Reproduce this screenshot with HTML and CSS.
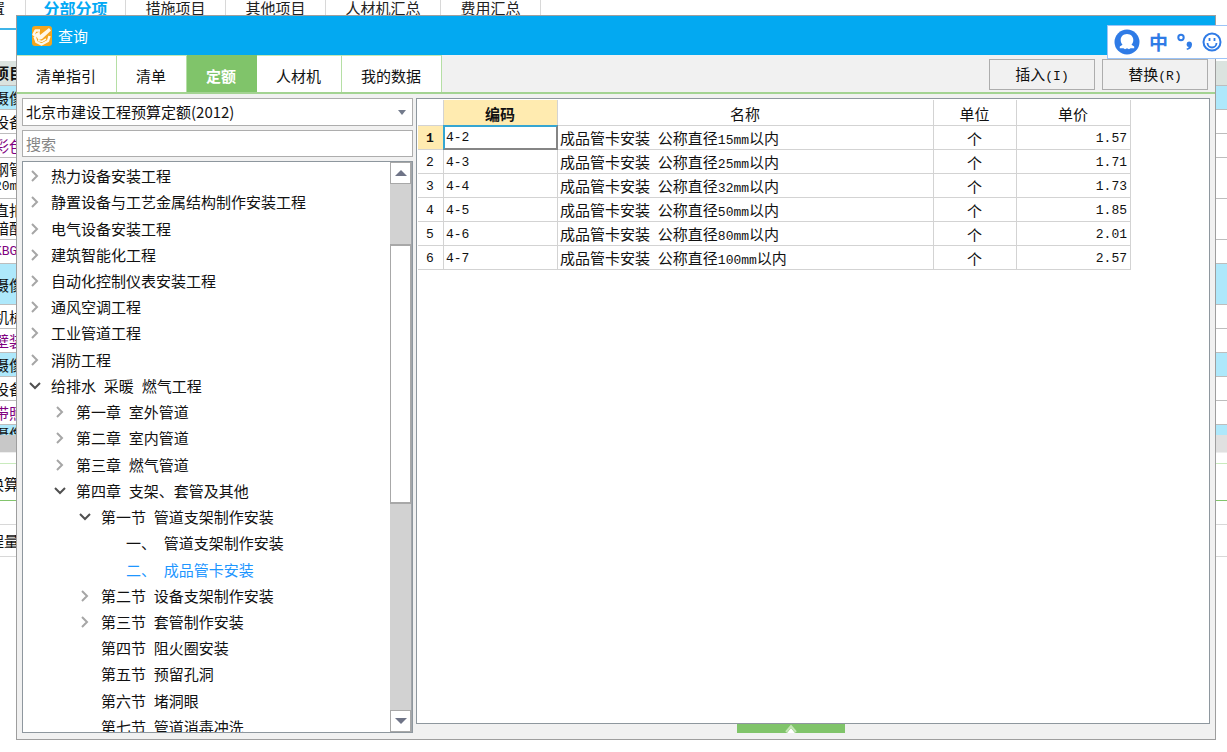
FILE: index.html
```html
<!DOCTYPE html>
<html lang="zh-CN">
<head>
<meta charset="utf-8">
<title>查询</title>
<link rel="stylesheet" href="styles.css">
</head>
<body>
<svg class="defs" aria-hidden="true">
  <symbol id="right" viewBox="0 0 12 12"><path d="M3 1l5 5-5 5" fill="none" stroke="#a6a6a6" stroke-width="2"/></symbol>
  <symbol id="down" viewBox="0 0 12 12"><path d="M1 3l5 5 5-5" fill="none" stroke="#505050" stroke-width="2"/></symbol>
</svg>

<main class="sheet">
  <nav class="sheet-tabs">
    <a class="sheet-tab first" href="#">置</a>
    <a class="sheet-tab current" href="#">分部分项</a>
    <a class="sheet-tab" href="#">措施项目</a>
    <a class="sheet-tab" href="#">其他项目</a>
    <a class="sheet-tab wide" href="#">人材机汇总</a>
    <a class="sheet-tab" href="#">费用汇总</a>
  </nav>
  <div class="sheet-rows">
    <div class="row head"><div>项目</div></div>
    <div class="row group"><div>摄像</div></div>
    <div class="row"><div>设备</div></div>
    <div class="row material"><div>彩色</div></div>
    <div class="row tall"><div>钢管</div><div class="n">20mm</div></div>
    <div class="row tall"><div>直扣</div><div>暗配</div></div>
    <div class="row material"><div class="n">KBG</div></div>
    <div class="row group tall single"><div>摄像</div></div>
    <div class="row"><div>机械</div></div>
    <div class="row material"><div>壁装</div></div>
    <div class="row group"><div>摄像</div></div>
    <div class="row"><div>设备</div></div>
    <div class="row material"><div>带照</div></div>
    <div class="row group cut"><div>摄像</div></div>
    <div class="row bar"></div>
  </div>
  <div class="detail">
    <div class="detail-tab">换算</div>
    <div class="detail-gap"></div>
    <div class="detail-head">程量</div>
  </div>
</main>

<section class="dialog" role="dialog" aria-labelledby="dialog-title">
  <header class="titlebar">
    <svg class="logo" viewBox="0 0 20 20" aria-hidden="true">
      <rect width="20" height="20" rx="3" fill="#f5a51d"/>
      <path d="M8 4.500H3.500L1.500 8.500l3.500 2M2.500 10.500l2 5.500 5 2.500 6.500-3.500 1.500-5" fill="none" stroke="#fff8e8" stroke-width="2.400" stroke-linejoin="round"/>
      <path d="M3 8l4.500-2.500L8 9l9-7 2 2.500-9 8.500-3.500 1z" fill="#fff8e8"/>
      <path d="M6 14.500l4 1 4-2.500" fill="none" stroke="#fff8e8" stroke-width="1.500"/>
    </svg>
    <h1 id="dialog-title">查询</h1>
  </header>

  <div class="toolbar">
    <nav class="tabs">
      <button class="tab">清单指引</button>
      <button class="tab">清单</button>
      <button class="tab active">定额</button>
      <button class="tab">人材机</button>
      <button class="tab">我的数据</button>
    </nav>
    <div class="actions">
      <button class="action">插入<span class="n">(I)</span></button>
      <button class="action">替换<span class="n">(R)</span></button>
    </div>
  </div>

  <div class="body">
    <aside class="side">
      <div class="combo">
        <select aria-label="定额库"><option>北京市建设工程预算定额(2012)</option></select>
        <svg class="caret" viewBox="0 0 8 5" aria-hidden="true"><path d="M0 0h8L4 5z" fill="#737b8c"/></svg>
      </div>
      <input class="search" type="text" placeholder="搜索" aria-label="搜索">
      <div class="tree">
        <ul class="nodes">
          <li><svg><use href="#right"/></svg>热力设备安装工程</li>
          <li><svg><use href="#right"/></svg>静置设备与工艺金属结构制作安装工程</li>
          <li><svg><use href="#right"/></svg>电气设备安装工程</li>
          <li><svg><use href="#right"/></svg>建筑智能化工程</li>
          <li><svg><use href="#right"/></svg>自动化控制仪表安装工程</li>
          <li><svg><use href="#right"/></svg>通风空调工程</li>
          <li><svg><use href="#right"/></svg>工业管道工程</li>
          <li><svg><use href="#right"/></svg>消防工程</li>
          <li><svg><use href="#down"/></svg>给排水<span class="n"> </span>采暖<span class="n"> </span>燃气工程</li>
          <li class="l2"><svg><use href="#right"/></svg>第一章<span class="n"> </span>室外管道</li>
          <li class="l2"><svg><use href="#right"/></svg>第二章<span class="n"> </span>室内管道</li>
          <li class="l2"><svg><use href="#right"/></svg>第三章<span class="n"> </span>燃气管道</li>
          <li class="l2"><svg><use href="#down"/></svg>第四章<span class="n"> </span>支架、套管及其他</li>
          <li class="l3"><svg><use href="#down"/></svg>第一节<span class="n"> </span>管道支架制作安装</li>
          <li class="l4"><svg></svg>一、<span class="n"> </span>管道支架制作安装</li>
          <li class="l4 selected"><svg></svg>二、<span class="n"> </span>成品管卡安装</li>
          <li class="l3"><svg><use href="#right"/></svg>第二节<span class="n"> </span>设备支架制作安装</li>
          <li class="l3"><svg><use href="#right"/></svg>第三节<span class="n"> </span>套管制作安装</li>
          <li class="l3"><svg></svg>第四节<span class="n"> </span>阻火圈安装</li>
          <li class="l3"><svg></svg>第五节<span class="n"> </span>预留孔洞</li>
          <li class="l3"><svg></svg>第六节<span class="n"> </span>堵洞眼</li>
          <li class="l3"><svg></svg>第七节<span class="n"> </span>管道消毒冲洗</li>
        </ul>
        <div class="scrollbar">
          <button class="arrow" aria-label="向上"><svg viewBox="0 0 12 6"><path d="M0 6l6-6 6 6z" fill="#6f7487"/></svg></button>
          <div class="track-above"></div>
          <div class="thumb"></div>
          <div class="track-below"></div>
          <button class="arrow" aria-label="向下"><svg viewBox="0 0 12 6"><path d="M0 0h12L6 6z" fill="#6f7487"/></svg></button>
        </div>
      </div>
    </aside>

    <div class="result">
      <div class="grid-panel">
        <table class="grid">
          <colgroup><col class="c-no"><col class="c-code"><col class="c-name"><col class="c-unit"><col class="c-price"></colgroup>
          <thead>
            <tr><th></th><th class="hot">编码</th><th>名称</th><th>单位</th><th>单价</th></tr>
          </thead>
          <tbody>
            <tr><td class="no hot">1</td><td class="focus"><div class="n">4-2</div></td><td>成品管卡安装<span class="n"> </span>公称直径<span class="n">15mm</span>以内</td><td class="unit">个</td><td class="price">1.57</td></tr>
            <tr><td class="no">2</td><td class="n">4-3</td><td>成品管卡安装<span class="n"> </span>公称直径<span class="n">25mm</span>以内</td><td class="unit">个</td><td class="price">1.71</td></tr>
            <tr><td class="no">3</td><td class="n">4-4</td><td>成品管卡安装<span class="n"> </span>公称直径<span class="n">32mm</span>以内</td><td class="unit">个</td><td class="price">1.73</td></tr>
            <tr><td class="no">4</td><td class="n">4-5</td><td>成品管卡安装<span class="n"> </span>公称直径<span class="n">50mm</span>以内</td><td class="unit">个</td><td class="price">1.85</td></tr>
            <tr><td class="no">5</td><td class="n">4-6</td><td>成品管卡安装<span class="n"> </span>公称直径<span class="n">80mm</span>以内</td><td class="unit">个</td><td class="price">2.01</td></tr>
            <tr><td class="no">6</td><td class="n">4-7</td><td>成品管卡安装<span class="n"> </span>公称直径<span class="n">100mm</span>以内</td><td class="unit">个</td><td class="price">2.57</td></tr>
          </tbody>
        </table>
      </div>
      <button class="handle" aria-label="展开"><svg viewBox="0 0 12 9"><path d="M6 4L10 9H2z" fill="#fff"/><path d="M1 8l5-6 5 6" fill="none" stroke="#c4e6b6" stroke-width="2"/></svg></button>
    </div>
  </div>
</section>

<div class="ime">
  <svg class="ime-user" viewBox="0 0 26 26" aria-hidden="true">
    <circle cx="13" cy="13" r="12.500" fill="#2f7be6"/>
    <path d="M13 5c4 0 6.300 2.800 6.300 6 0 2.200-.8 3.600-1.800 4.800l2.700 1.600v1.800h-3.700L15 20.200l-2-1-2 1-1.500-1H5.800v-1.800l2.700-1.600c-1-1.200-1.800-2.600-1.800-4.800 0-3.200 2.300-6 6.300-6z" fill="#fff"/>
  </svg>
  <span class="ime-mode">中</span>
  <svg class="ime-punct" viewBox="0 0 16 18" aria-hidden="true">
    <circle cx="4" cy="4.500" r="2.700" fill="none" stroke="#2f7be6" stroke-width="2"/>
    <path d="M12 8.500a3 3 0 0 1 3 3c0 3-2 5-5 5.500l-.5-1.500c1.300-.3 2-.8 2.200-1.500A2.800 2.800 0 0 1 12 8.500z" fill="#2f7be6"/>
  </svg>
  <svg class="ime-face" viewBox="0 0 20 20" aria-hidden="true">
    <circle cx="10" cy="10" r="8.500" fill="none" stroke="#2f7be6" stroke-width="2"/>
    <path d="M5.500 11a4.500 4.500 0 0 0 9 0M7.500 6v3M12.500 6v3" fill="none" stroke="#2f7be6" stroke-width="1.800"/>
  </svg>
</div>
</body>
</html>
```

FILE: styles.css
```css
* { box-sizing: border-box; }

body {
  margin: 0;
  height: 100vh;
  overflow: hidden;
  position: relative;
  background: #fff;
  color: #111;
  font: 15px/18px "Noto Sans CJK SC", sans-serif;
}

button, input, select { font: inherit; color: inherit; margin: 0; border-radius: 0; }
ul { margin: 0; padding: 0; list-style: none; }
.defs { display: none; }

/* half-width characters */
.n, .price, .no { font-family: "Liberation Mono", monospace; font-size: 13px; white-space: pre; }

/* sheet behind the dialog */
.sheet { display: flex; flex-direction: column; }
.sheet-tabs { display: flex; height: 30px; border-bottom: 2px solid #3fb4e8; }
.sheet-tab {
  flex: 0 0 100px;
  line-height: 16px;
  text-align: center;
  text-decoration: none;
  color: #222;
  border-right: 1px solid #d8d8d8;
}
.sheet-tab.first { flex-basis: 26px; text-indent: -10px; text-align: left; }
.sheet-tab.current { color: #03a9f4; font-weight: bold; font-size: 16px; }
.sheet-tab.wide { flex-basis: 115px; }

.sheet-rows { margin-top: 31px; }
.row {
  height: 24px;
  padding-top: 3px;
  border-bottom: 1px solid #bdbdbd;
  overflow: hidden;
}
.row div { margin-left: -6px; }
.row.head { height: 25px; background: #dbe3df; font-weight: bold; }
.row.group { background: #aee8fb; }
.row.material { color: #800080; }
.row.tall { height: 41px; padding-top: 2px; }
.row.single { padding-top: 12px; }
.row.cut { height: 10px; padding-top: 0; border: 0; }
.row.bar { height: 18px; background: linear-gradient(to right, #c8c8c8 50%, #e0e0e0 50%); border-bottom: 1px solid #eee; }
.detail { margin-top: 10px; text-indent: -11px; }
.detail-tab { height: 38px; padding-top: 11px; border-top: 1px solid #c9ebbd; border-bottom: 1px solid #82c46c; }
.detail-gap { height: 24px; border-bottom: 1px solid #d8d8d8; }
.detail-head { height: 32px; padding-top: 7px; border-bottom: 1px solid #d8d8d8; }

/* dialog */
.dialog {
  position: absolute;
  inset: 15px 11px 12px 16px;
  display: flex;
  flex-direction: column;
  background: #f1f1f1;
  border: 1px solid #9e9e9e;
}
.titlebar {
  flex: none;
  display: flex;
  align-items: center;
  gap: 6px;
  height: 39px;
  padding-left: 15px;
  background: #03a9f1;
  color: #fff;
}
.titlebar h1 { margin: 0; font-size: 15px; font-weight: normal; }
.logo { width: 20px; height: 20px; }

.toolbar {
  flex: none;
  display: flex;
  justify-content: space-between;
  height: 39px;
  border-bottom: 2px solid #a3d392;
}
.tabs { display: flex; }
.tab {
  padding: 3px 20px 0 19px;
  background: #fff;
  border: 0;
  border-top: 1px solid #c5e8b7;
  border-right: 1px solid #b5dfa5;
}
.tab.active { background: #80c46a; border-color: #80c46a; color: #fff; font-weight: bold; }
.actions { display: flex; gap: 7px; padding: 4px 7px 2px 0; }
.action { width: 106px; padding: 2px 0 0; background: #f1f1f1; border: 1px solid #adadad; }

.body { flex: 1; min-height: 0; display: flex; gap: 3px; padding: 4px 5px 6px; }
.side { flex: 0 0 391px; display: flex; flex-direction: column; gap: 4px; }
.combo { position: relative; flex: none; height: 28px; }
.combo select {
  width: 100%;
  height: 100%;
  padding: 0 20px 0 3px;
  appearance: none;
  background: #fff;
  border: 1px solid #adadad;
}
.caret { position: absolute; right: 7px; top: 12px; width: 8px; height: 5px; pointer-events: none; }
.search { flex: none; height: 27px; padding: 0 3px; background: #fff; border: 1px solid #adadad; }
.search::placeholder { color: #858585; }

.tree { flex: 1; min-height: 0; display: flex; overflow: hidden; background: #fff; border: 1px solid #8e979e; }
.nodes { flex: 1; height: calc(100% + 8px); padding-top: 1px; display: grid; grid-auto-rows: 1fr; }
.nodes li { display: flex; align-items: center; min-height: 0; padding-left: 6px; white-space: pre; }
.nodes svg { flex: none; width: 12px; height: 12px; margin-right: 10px; }
.nodes .l2 { padding-left: 31px; }
.nodes .l3 { padding-left: 56px; }
.nodes .l4 { padding-left: 81px; }
.nodes .selected { color: #1e96ff; }

.scrollbar { flex: 0 0 22px; display: flex; flex-direction: column; background: #d2d2d2; border-right: 1px solid #a2a6ab; }
.arrow {
  flex: 0 0 22px;
  display: flex;
  align-items: center;
  justify-content: center;
  padding: 0;
  background: #fff;
  border: 1px solid #a8a8a8;
}
.arrow svg { width: 12px; height: 6px; }
.track-above { flex: 60; }
.thumb { flex: 258; background: #fff; border: 1px solid #a8a8a8; border-width: 2px 1px; }
.track-below { flex: 208; }

.result { flex: 1; min-width: 0; display: flex; flex-direction: column; align-items: center; }
.grid-panel { flex: 1; align-self: stretch; background: #fff; border: 1px solid #8e979e; padding: 1px; }
.grid { table-layout: fixed; width: 713px; border-collapse: separate; border-spacing: 0; }
.c-no { width: 26px; }
.c-code { width: 114px; }
.c-name { width: 376px; }
.c-unit { width: 83px; }
.c-price { width: 114px; }
.grid th, .grid td {
  height: 24px;
  padding: 3px 3px 0 2px;
  border-right: 1px solid #d3d3d3;
  border-bottom: 1px solid #d3d3d3;
  text-align: left;
  font-weight: normal;
  line-height: 16px;
  white-space: pre;
}
.grid th { height: 26px; text-align: center; }
.grid .hot { background: #ffebb0; font-weight: bold; }
.grid .no, .grid .unit { text-align: center; }
.grid .price { text-align: right; }
.grid .focus { padding: 0; }
.focus div {
  height: 25px;
  line-height: 22px;
  margin: -1px;
  padding-left: 1px;
  border: 2px solid;
  border-color: #35a6d2 #858585 #858585 #35a6d2;
}
.handle {
  width: 108px;
  height: 9px;
  padding: 0;
  display: flex;
  justify-content: center;
  background: #80c46a;
  border: 0;
  margin-right: 45px;
}
.handle svg { width: 12px; height: 9px; }

/* input method bar */
.ime {
  position: absolute;
  right: 0;
  top: 25px;
  display: flex;
  align-items: center;
  gap: 9px;
  height: 34px;
  padding: 0 5px 0 6px;
  background: #fff;
  border: 1px solid #9cc4f7;
  border-right: 0;
  color: #2f7be6;
}
.ime-user { width: 26px; height: 26px; }
.ime-mode { font-size: 19px; font-weight: bold; }
.ime-punct { width: 16px; height: 18px; }
.ime-face { width: 20px; height: 20px; }
```
